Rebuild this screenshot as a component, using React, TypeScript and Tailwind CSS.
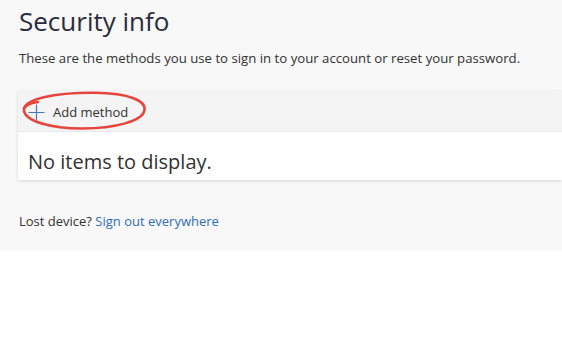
export default function App() {
  return (
    <div className="w-[562px] h-[355px] bg-white overflow-hidden" style={{ fontFamily: '"Open Sans", "Noto Sans", sans-serif' }}>
      <div className="bg-[#f8f8f8] h-[250px] pl-[19px] pt-[3px]">
        <h1 className="text-[26px] leading-[36px] text-[#2b2b3b] font-normal">Security info</h1>
        <p className="mt-[10px] text-[13.2px] leading-[18px] text-[#323130]">
          These are the methods you use to sign in to your account or reset your password.
        </p>

        <div className="mt-[24px] -ml-[1px] bg-white shadow-[0_1px_3px_rgba(0,0,0,0.15)]">
          <div className="relative h-[41px] bg-[#f4f4f4] border-b border-[#e8e8e8] flex items-center">
            <button className="flex items-center gap-[8px] pl-[10px] pt-[3px] h-full text-[13px] text-[#323130]">
              <svg width="17" height="17" viewBox="0 0 17 17" className="text-[#4a76b8]">
                <path d="M8.5 0.5v16M0.5 8.5h16" stroke="currentColor" strokeWidth="1.2" fill="none" />
              </svg>
              <span>Add method</span>
            </button>
            <svg className="absolute left-[2px] top-0" width="128" height="40" viewBox="0 0 128 40">
              <path
                d="M4 20 C2 8 35 1.5 75 1.8 C110 2.2 126 10 124.5 19 C123 30 95 37.5 62 37.5 C30 37.5 6 30 4 20 C3 15 10 12 18 11"
                stroke="#e6453d"
                strokeWidth="2.6"
                fill="none"
                strokeLinecap="round"
              />
            </svg>
          </div>
          <div className="h-[48px] pl-[10px] pt-[16px]">
            <span className="text-[20px] leading-[28px] text-[#323130]">No items to display.</span>
          </div>
        </div>

        <p className="mt-[32px] text-[13px] text-[#323130]">
          Lost device? <a className="text-[#2f6db5]">Sign out everywhere</a>
        </p>
      </div>
    </div>
  );
}
